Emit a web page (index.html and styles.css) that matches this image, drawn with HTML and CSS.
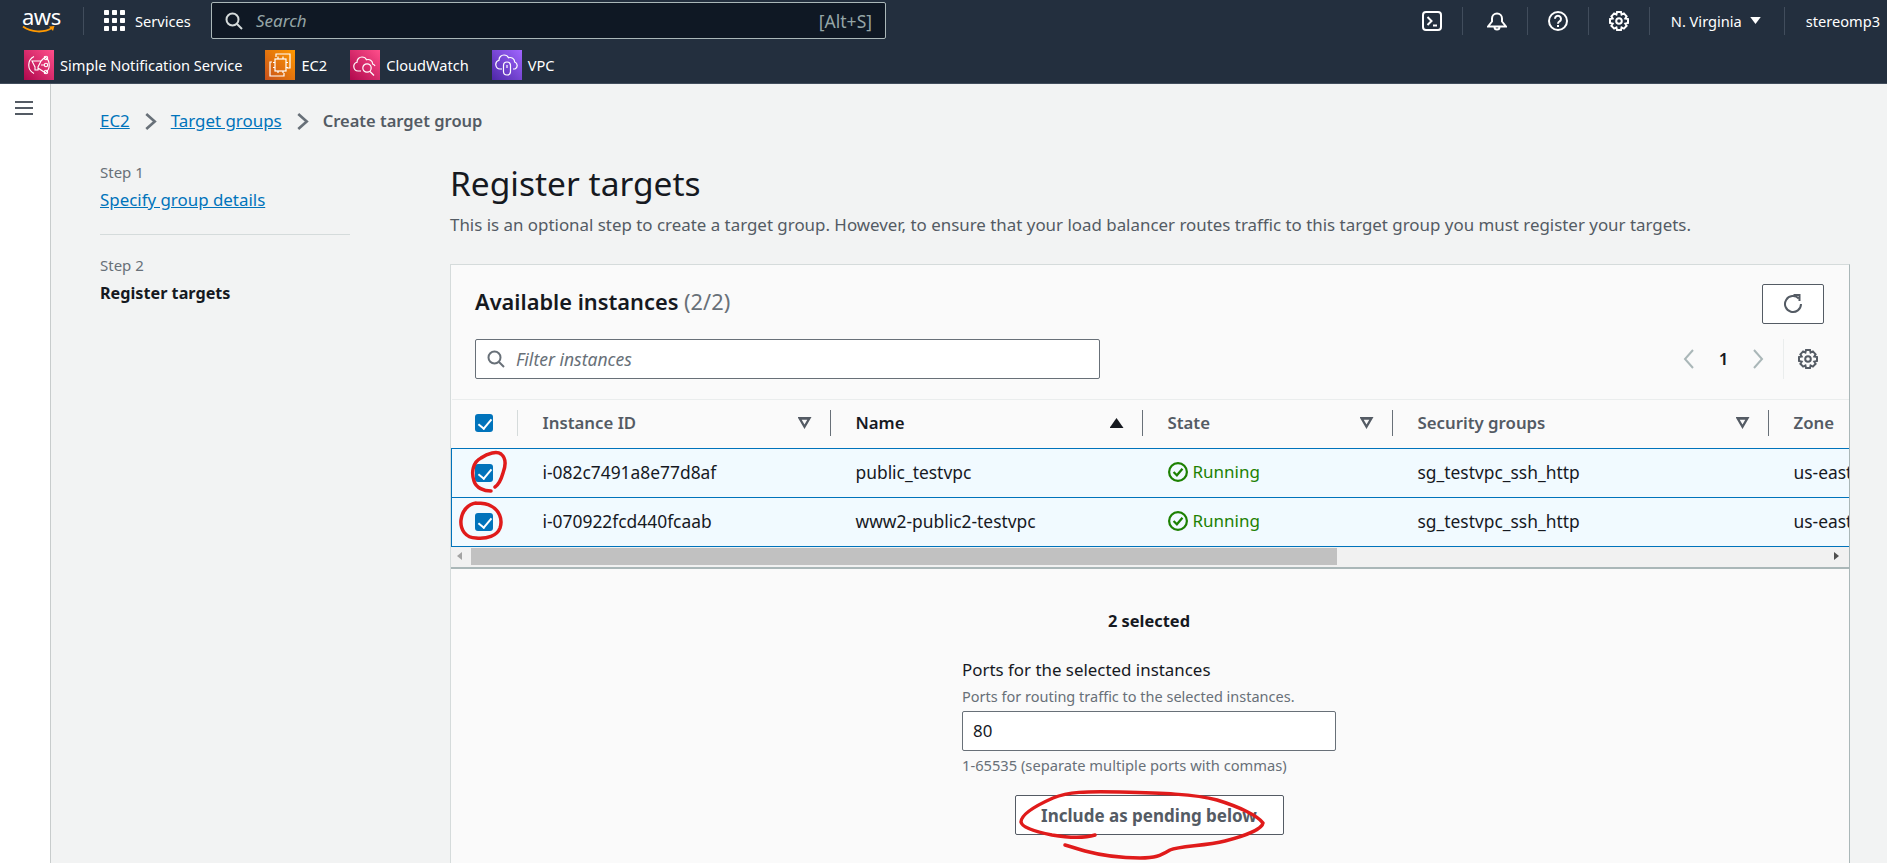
FILE: index.html
```html
<!DOCTYPE html>
<html lang="en">
<head>
  <meta charset="UTF-8">
  <title>Create target group | EC2</title>
  <link rel="stylesheet" href="styles.css">
</head>
<body>

<header class="topbar">
  <div class="nav-row">
    <a class="aws-logo">
      <span class="aws-word">aws</span>
      <svg class="aws-smile" viewBox="0 0 34 9"><path d="M1 1.500C9 7.500 22 8 30 3" fill="none" stroke="#ff9900" stroke-width="2"/><path d="M27 1.500l5.500-.5-1.500 5z" fill="#ff9900"/></svg>
    </a>
    <span class="nav-sep sep-logo"></span>
    <svg class="grid-icon" viewBox="0 0 21 21" fill="#fff"><rect x="0" y="0" width="5" height="5" rx=".8"/><rect x="8" y="0" width="5" height="5" rx=".8"/><rect x="16" y="0" width="5" height="5" rx=".8"/><rect x="0" y="8" width="5" height="5" rx=".8"/><rect x="8" y="8" width="5" height="5" rx=".8"/><rect x="16" y="8" width="5" height="5" rx=".8"/><rect x="0" y="16" width="5" height="5" rx=".8"/><rect x="8" y="16" width="5" height="5" rx=".8"/><rect x="16" y="16" width="5" height="5" rx=".8"/></svg>
    <span class="nav-services">Services</span>
    <div class="nav-search">
      <svg class="search-icon" viewBox="0 0 18 18" fill="none" stroke="#d5dbdb" stroke-width="2"><circle cx="7.500" cy="7.500" r="6"/><path d="M12 12l5 5"/></svg>
      <span class="nav-search-text">Search</span>
      <span class="nav-search-key">[Alt+S]</span>
    </div>
    <div class="nav-right">
      <svg class="nav-icon icon-shell" viewBox="0 0 20 20" fill="none" stroke="#fff" stroke-width="2"><rect x="1" y="1" width="18" height="18" rx="3"/><path d="M5.500 6l4 4-4 4M11 14.500h4"/></svg>
      <span class="nav-sep"></span>
      <svg class="nav-icon" viewBox="0 0 20 20" fill="none" stroke="#fff" stroke-width="2"><path d="M1 15.500h18l-4-5V7.500a5 5 0 0 0-10 0v3zM7.500 16a2.500 2.500 0 0 0 5 0"/></svg>
      <span class="nav-sep"></span>
      <svg class="nav-icon" viewBox="0 0 20 20" fill="none" stroke="#fff" stroke-width="2"><circle cx="10" cy="10" r="9"/><path d="M7 7.800a3 3 0 1 1 4.600 2.500c-1 .7-1.600 1.200-1.600 2.400"/><path d="M10 14v2"/></svg>
      <span class="nav-sep"></span>
      <svg class="nav-icon" viewBox="0 0 20 20" fill="none" stroke="#fff" stroke-width="2"><path d="M8 1h4l.6 2.600 2.300-1.200 2.700 2.900-1.300 2.200L19 8v4l-2.700.6 1.300 2.200-2.700 2.800-2.300-1.200L12 19H8l-.6-2.600-2.300 1.200-2.700-2.800 1.300-2.200L1 12V8l2.700-.5-1.300-2.200 2.700-2.900 2.300 1.200z"/><circle cx="10" cy="10" r="2.800"/></svg>
      <span class="nav-sep"></span>
      <span class="nav-region">N. Virginia</span>
      <svg class="nav-caret" viewBox="0 0 12 8" fill="#fff"><path d="M0 0h12L6 8z"/></svg>
      <span class="nav-sep"></span>
      <span class="nav-user">stereomp3</span>
    </div>
  </div>
  <div class="fav-row">
    <a class="fav">
      <svg class="tile" viewBox="0 0 30 30">
        <defs><linearGradient id="pink" x1="0" y1="1" x2="1" y2="0"><stop offset="0" stop-color="#b0084d"/><stop offset="1" stop-color="#ff4f8b"/></linearGradient></defs>
        <rect width="30" height="30" fill="url(#pink)"/>
        <g fill="none" stroke="#fff" stroke-width="1.100"><path d="M10 6.500a9.500 9.500 0 0 0 0 17M20 6.500a9.500 9.500 0 0 1 0 17"/><path d="M8 11h9l-3 6v3h-3v-3zM17 15h3M17 11l3-3M14 18l6 4"/><circle cx="22" cy="8" r="1.700"/><circle cx="22" cy="15" r="1.700"/><circle cx="22" cy="22" r="1.700"/></g>
      </svg>
      Simple Notification Service
    </a>
    <a class="fav">
      <svg class="tile" viewBox="0 0 30 30">
        <defs><linearGradient id="orange" x1="0" y1="1" x2="1" y2="0"><stop offset="0" stop-color="#c8511b"/><stop offset="1" stop-color="#ff9900"/></linearGradient></defs>
        <rect width="30" height="30" fill="url(#orange)"/>
        <g fill="none" stroke="#fff" stroke-width="1.200"><path d="M11 7V4h14v14h-3M7 12H5v14h14v-3"/><rect x="10" y="9" width="11" height="12"/><path d="M13 6.500v2.500M18 6.500v2.500M13 21v2M18 21v2M8 12.500h2M8 17.500h2M21 12.500h2M21 17.500h2"/></g>
      </svg>
      EC2
    </a>
    <a class="fav">
      <svg class="tile" viewBox="0 0 30 30">
        <rect width="30" height="30" fill="url(#pink)"/>
        <g fill="none" stroke="#fff" stroke-width="1.200"><path d="M11 21H8a4.500 4.500 0 0 1-1-8.800 5 5 0 0 1 5-5.200c2 0 3.700 1 4.500 2.800 3-1 6 1 6.200 4.200 1 .3 2 1 2.300 2"/><circle cx="17" cy="18" r="4.200"/><path d="M20 21.500l4 4"/></g>
      </svg>
      CloudWatch
    </a>
    <a class="fav">
      <svg class="tile" viewBox="0 0 30 30">
        <defs><linearGradient id="purple" x1="0" y1="1" x2="1" y2="0"><stop offset="0" stop-color="#4d27a8"/><stop offset="1" stop-color="#a166ff"/></linearGradient></defs>
        <rect width="30" height="30" fill="url(#purple)"/>
        <g fill="none" stroke="#fff" stroke-width="1.200"><path d="M10 19H8a4.500 4.500 0 0 1-1-8.800A5 5 0 0 1 12 5c2 0 3.700 1 4.500 2.800 3-1 6 1 6.200 4.200a3.800 3.800 0 0 1 .3 7h-2"/><rect x="11.500" y="12" width="7" height="13" rx="3.500"/><path d="M15 15v3"/></g>
      </svg>
      VPC
    </a>
  </div>
</header>

<div class="page">
  <aside class="sidebar">
    <svg class="menu-icon" viewBox="0 0 18 14" fill="none" stroke="#545b64" stroke-width="2"><path d="M0 1h18M0 7h18M0 13h18"/></svg>
  </aside>

  <div class="content">
    <nav class="crumbs">
      <a class="link">EC2</a>
      <svg class="crumb-sep" viewBox="0 0 12 18" fill="none" stroke="#687078" stroke-width="2.500"><path d="M2 2l8 7-8 7"/></svg>
      <a class="link">Target groups</a>
      <svg class="crumb-sep" viewBox="0 0 12 18" fill="none" stroke="#687078" stroke-width="2.500"><path d="M2 2l8 7-8 7"/></svg>
      <span class="crumb-current">Create target group</span>
    </nav>

    <div class="wizard">
      <div class="steps">
        <div class="step-label">Step 1</div>
        <a class="link step-name">Specify group details</a>
        <div class="step-line"></div>
        <div class="step-label">Step 2</div>
        <div class="step-name step-active">Register targets</div>
      </div>

      <main class="main">
        <h1>Register targets</h1>
        <p class="lead">This is an optional step to create a target group. However, to ensure that your load balancer routes traffic to this target group you must register your targets.</p>

        <section class="card">
          <div class="card-head">
            <div class="head-row">
              <h2>Available instances <span class="count">(2/2)</span></h2>
              <button class="btn-icon">
                <svg viewBox="0 0 20 20" width="20" height="20" fill="none" stroke="#545b64" stroke-width="2"><path d="M15.800 4.500A8 8 0 1 0 18 10"/><path d="M10.500 1h6v6" stroke-linejoin="miter"/></svg>
              </button>
            </div>
            <div class="head-row filter-row">
              <div class="filter-box">
                <svg class="filter-search" viewBox="0 0 18 18" fill="none" stroke="#687078" stroke-width="2"><circle cx="7.500" cy="7.500" r="6"/><path d="M12 12l5 5"/></svg>
                <span class="filter-text">Filter instances</span>
              </div>
              <div class="pager">
                <svg class="pager-arrow" viewBox="0 0 12 20" fill="none" stroke="#aab7b8" stroke-width="2"><path d="M10 1l-8 9 8 9"/></svg>
                <span class="pager-num">1</span>
                <svg class="pager-arrow" viewBox="0 0 12 20" fill="none" stroke="#aab7b8" stroke-width="2"><path d="M2 1l8 9-8 9"/></svg>
                <span class="pager-sep"></span>
                <svg class="pager-gear" viewBox="0 0 20 20" fill="none" stroke="#545b64" stroke-width="2"><path d="M8 1h4l.6 2.600 2.300-1.200 2.700 2.900-1.300 2.200L19 8v4l-2.700.6 1.300 2.200-2.700 2.800-2.300-1.200L12 19H8l-.6-2.600-2.300 1.200-2.700-2.800 1.300-2.200L1 12V8l2.700-.5-1.300-2.200 2.700-2.900 2.300 1.200z"/><circle cx="10" cy="10" r="2.800"/></svg>
              </div>
            </div>
          </div>

          <div class="table-wrap">
            <table>
              <colgroup>
                <col class="col-check"><col class="col-id"><col class="col-name"><col class="col-state"><col class="col-sg"><col class="col-zone">
              </colgroup>
              <thead>
                <tr>
                  <th><div class="th-cell th-check"><span class="check"></span></div></th>
                  <th><div class="th-cell">Instance ID <span class="filter-tri"></span></div></th>
                  <th class="th-sorted"><div class="th-cell">Name <span class="sort-tri"></span></div></th>
                  <th><div class="th-cell">State <span class="filter-tri"></span></div></th>
                  <th><div class="th-cell">Security groups <span class="filter-tri"></span></div></th>
                  <th><div class="th-cell th-last">Zone</div></th>
                </tr>
              </thead>
              <tbody>
                <tr>
                  <td class="td-check"><span class="check"></span></td>
                  <td>i-082c7491a8e77d8af</td>
                  <td>public_testvpc</td>
                  <td class="running"><svg class="ok-icon" viewBox="0 0 18 18" fill="none" stroke="#1d8102" stroke-width="2"><circle cx="9" cy="9" r="8"/><path d="M5 9l3 3 5-6"/></svg>Running</td>
                  <td>sg_testvpc_ssh_http</td>
                  <td>us-east-1a</td>
                </tr>
                <tr>
                  <td class="td-check"><span class="check"></span></td>
                  <td>i-070922fcd440fcaab</td>
                  <td>www2-public2-testvpc</td>
                  <td class="running"><svg class="ok-icon" viewBox="0 0 18 18" fill="none" stroke="#1d8102" stroke-width="2"><circle cx="9" cy="9" r="8"/><path d="M5 9l3 3 5-6"/></svg>Running</td>
                  <td>sg_testvpc_ssh_http</td>
                  <td>us-east-1b</td>
                </tr>
              </tbody>
            </table>
          </div>

          <div class="hscroll">
            <span class="scroll-btn scroll-left"></span>
            <div class="scroll-track"><div class="scroll-thumb"></div></div>
            <span class="scroll-btn scroll-right"></span>
          </div>

          <div class="selection">
            <div class="sel-count">2 selected</div>
            <div class="port-form">
              <div class="port-label">Ports for the selected instances</div>
              <div class="port-desc">Ports for routing traffic to the selected instances.</div>
              <div class="port-input">80</div>
              <div class="port-desc port-hint">1-65535 (separate multiple ports with commas)</div>
            </div>
            <button class="btn-include">Include as pending below</button>
          </div>
        </section>
      </main>
    </div>
  </div>
</div>

<!-- red pen marks drawn over the screenshot -->
<svg class="scribble" viewBox="0 0 1887 863" fill="none" stroke="#e01b1b" stroke-width="3.500" stroke-linecap="round" stroke-linejoin="round">
  <path d="M491 491C484 491 476 488 474 481C471 472 473 462 481 458C488 453 497 451 501 454C506 458 506 465 503 473C501 480 498 485 495 487"/>
  <path d="M476 503C468 504 462 511 461 520C460 530 466 538 476 538C487 539 497 536 500 528C503 519 499 510 491 506C486 503 481 503 476 503"/>
  <path d="M1095 835C1085 838 1070 838 1052 835C1037 832 1022 828 1021 822C1021 815 1035 806 1053 798C1068 792 1085 791 1120 792C1160 793 1195 794 1217 800C1240 807 1258 816 1263 823C1262 829 1245 836 1225 841C1205 846 1180 846 1170 850C1160 856 1155 858 1140 858C1120 858 1100 855 1085 851C1078 849 1072 847 1065 845"/>
</svg>

</body>
</html>
```

FILE: styles.css
```css
* {
  box-sizing: border-box;
}
html, body {
  margin: 0;
  height: 863px;
  overflow: hidden;
}
body {
  position: relative;
  font-family: "Noto Sans", "Open Sans", Arial, sans-serif;
  font-size: 16.9px;
  line-height: 20px;
  color: #16191f;
  background: #f2f3f3;
}
h1, h2, p {
  margin: 0;
  font-weight: normal;
}
button {
  font-family: inherit;
}
svg {
  display: block;
  flex: none;
}
.link {
  color: #0073bb;
  text-decoration: underline;
}

/* top navigation */
.topbar {
  height: 84px;
  background: #232f3e;
  color: #fff;
  border-bottom: 1px solid #414d5c;
}
.nav-row {
  height: 41px;
  display: flex;
  align-items: center;
  font-size: 14.6px;
}
.aws-logo {
  width: 83px;
  padding-left: 22px;
  display: block;
}
.aws-word {
  display: block;
  font-size: 22px;
  line-height: 18px;
  letter-spacing: -.5px;
}
.aws-smile {
  width: 34px;
  height: 9px;
}
.nav-sep {
  width: 1px;
  height: 28px;
  background: #414d5c;
  flex: none;
}
.grid-icon {
  width: 21px;
  height: 21px;
  margin-left: 20px;
}
.nav-services {
  margin-left: 10px;
  width: 76px;
}
.nav-search {
  width: 675px;
  height: 37px;
  display: flex;
  align-items: center;
  background: #0f1824;
  border: 1px solid #aab7b8;
  border-radius: 2px;
  padding: 0 13px;
}
.search-icon {
  width: 18px;
  height: 18px;
}
.nav-search-text {
  margin-left: 13px;
  font-style: italic;
  font-size: 17px;
  color: #95a5a6;
}
.nav-search-key {
  margin-left: auto;
  font-size: 17.5px;
  color: #95a5a6;
}
.nav-right {
  margin-left: auto;
  display: flex;
  align-items: center;
  padding-right: 7px;
}
.nav-icon {
  width: 20px;
  height: 20px;
  margin: 0 20px;
}
.icon-shell + .nav-sep {
  margin-right: 4px;
}
.nav-region {
  margin-left: 21px;
}
.nav-caret {
  width: 11px;
  height: 7px;
  margin: 0 23px 0 8px;
}
.nav-user {
  margin-left: 21px;
}
.fav-row {
  height: 42px;
  display: flex;
  align-items: center;
  padding: 6px 0 0 24px;
  font-size: 14.6px;
  gap: 23px;
}
.fav {
  display: flex;
  align-items: center;
  gap: 6px;
}
.tile {
  width: 30px;
  height: 30px;
}

/* page frame */
.page {
  display: flex;
  height: 779px;
  overflow: hidden;
}
.sidebar {
  width: 51px;
  background: #fff;
  border-right: 1px solid #c8cccc;
  padding: 17px 0 0 15px;
  flex: none;
}
.menu-icon {
  width: 18px;
  height: 14px;
}
.content {
  flex: 1;
  min-width: 0;
  padding: 25px 37px 0 49px;
}
.crumbs {
  display: flex;
  align-items: center;
  height: 24px;
  gap: 14px;
}
.crumb-sep {
  width: 13px;
  height: 19px;
}
.crumb-current {
  font-size: 16.5px;
  font-weight: 600;
  color: #545b64;
}
.wizard {
  display: flex;
  margin-top: 29px;
}
.steps {
  width: 250px;
  margin-right: 100px;
  flex: none;
}
.step-label {
  font-size: 15px;
  color: #687078;
}
.step-name {
  display: block;
  margin-top: 8px;
}
.step-active {
  font-size: 16.2px;
  font-weight: 700;
}
.step-line {
  height: 1px;
  background: #d5dbdb;
  margin: 24px 0 20px;
}
.main {
  flex: 1;
  min-width: 0;
  margin-top: 3px;
}
h1 {
  font-size: 33.5px;
  line-height: 36px;
}
.lead {
  margin-top: 14px;
  color: #545b64;
}

/* instances card */
.card {
  height: 599px;
  margin-top: 29px;
  background: #fafafa;
  border: 1px solid #d5dbdb;
  border-right-color: #aab7b8;
  border-bottom: 0;
}
.card-head {
  padding: 19px 25px 20px 24px;
}
.head-row {
  display: flex;
  justify-content: space-between;
  align-items: flex-start;
}
h2 {
  font-size: 21.8px;
  line-height: 36px;
  font-weight: 600;
}
.count {
  font-weight: normal;
  color: #687078;
}
.btn-icon {
  width: 62px;
  height: 40px;
  background: #fff;
  border: 1px solid #545b64;
  border-radius: 2px;
  display: flex;
  align-items: center;
  justify-content: center;
  padding: 0;
}
.filter-row {
  margin-top: 15px;
  align-items: center;
}
.filter-box {
  width: 625px;
  height: 40px;
  background: #fff;
  border: 1px solid #687078;
  border-radius: 2px;
  display: flex;
  align-items: center;
  padding: 0 11px;
}
.filter-search {
  width: 18px;
  height: 18px;
}
.filter-text {
  margin-left: 11px;
  font-size: 17.5px;
  font-style: italic;
  color: #687078;
}
.pager {
  display: flex;
  align-items: center;
  height: 40px;
}
.pager-arrow {
  width: 12px;
  height: 20px;
}
.pager-num {
  width: 57px;
  text-align: center;
  font-weight: 600;
}
.pager-sep {
  width: 1px;
  height: 40px;
  background: #eaeded;
  margin: 0 14px 0 19px;
}
.pager-gear {
  width: 20px;
  height: 20px;
  margin-right: 6px;
}

/* table */
.table-wrap {
  overflow: hidden;
}
table {
  table-layout: fixed;
  border-collapse: collapse;
  width: 1530px;
}
.col-check { width: 66px; }
.col-id { width: 313px; }
.col-name { width: 312px; }
.col-state { width: 250px; }
.col-sg { width: 376px; }
.col-zone { width: 213px; }
th {
  height: 49px;
  padding: 0;
  border-top: 1px solid #eaeded;
  text-align: left;
  font-weight: 600;
  font-size: 16.8px;
  color: #545b64;
}
.th-sorted {
  color: #16191f;
}
.th-cell {
  height: 26px;
  margin-bottom: 2px;
  display: flex;
  align-items: center;
  justify-content: space-between;
  padding: 0 18px 0 25px;
  border-right: 1px solid #687078;
}
.th-check {
  padding: 0 0 0 23px;
  border-right-color: #d5dbdb;
}
.th-last {
  border-right: 0;
}
.filter-tri {
  width: 14px;
  height: 12px;
  background: #545b64;
  clip-path: polygon(0 0, 100% 0, 50% 100%, 0 0, 30% 22%, 50% 62%, 70% 22%, 30% 22%);
}
.sort-tri {
  width: 14px;
  height: 10px;
  background: #16191f;
  clip-path: polygon(50% 0, 100% 100%, 0 100%);
}
td {
  height: 49px;
  padding: 0 0 2px 25px;
  font-size: 17.4px;
  background: #f1faff;
  border-top: 1px solid #0073bb;
  border-bottom: 1px solid #0073bb;
  white-space: nowrap;
  overflow: hidden;
}
.td-check {
  padding: 0 0 0 23px;
  border-left: 1px solid #0073bb;
}
.check {
  display: block;
  width: 18px;
  height: 18px;
  border-radius: 3px;
  background: #0073bb;
  position: relative;
}
.check::after {
  content: "";
  position: absolute;
  left: 6px;
  top: 2px;
  width: 6px;
  height: 11px;
  border: solid #fff;
  border-width: 0 2px 2px 0;
  transform: rotate(40deg);
}
td.running {
  font-size: 17px;
  color: #1d8102;
}
.ok-icon {
  display: inline-block;
  vertical-align: -4px;
  width: 20px;
  height: 20px;
  margin-right: 5px;
}

/* fake scrollbar, Windows style */
.hscroll {
  height: 22px;
  display: flex;
  background: #f1f1f1;
  border-bottom: 2px solid #aab7b8;
}
.scroll-btn {
  width: 20px;
  position: relative;
  flex: none;
}
.scroll-btn::after {
  content: "";
  position: absolute;
  top: 5px;
  border: 4px solid transparent;
}
.scroll-left::after {
  left: 2px;
  border-right: 5px solid #a3a3a3;
}
.scroll-right::after {
  right: 6px;
  border-left: 5px solid #505050;
}
.scroll-track {
  flex: 1;
}
.scroll-thumb {
  width: 866px;
  height: 17px;
  margin-top: 1px;
  background: #c1c1c1;
}

/* bottom form */
.selection {
  padding: 42px 2px 0 0;
  display: flex;
  flex-direction: column;
  align-items: center;
}
.sel-count {
  font-size: 16.4px;
  font-weight: 700;
}
.port-form {
  width: 374px;
  margin-top: 29px;
}
.port-desc {
  font-size: 14.5px;
  line-height: 18px;
  color: #687078;
  margin-top: 7px;
}
.port-input {
  height: 40px;
  margin-top: 6px;
  background: #fff;
  border: 1px solid #687078;
  border-radius: 2px;
  padding: 0 10px;
  line-height: 38px;
}
.port-hint {
  margin-top: 5px;
  font-size: 14.7px;
}
.btn-include {
  width: 269px;
  height: 40px;
  margin-top: 21px;
  background: #fff;
  border: 1px solid #545b64;
  border-radius: 2px;
  font-size: 17px;
  font-weight: 700;
  color: #545b64;
  padding: 0;
}

/* pen marks */
.scribble {
  position: absolute;
  left: 0;
  top: 0;
  width: 1887px;
  height: 863px;
  pointer-events: none;
}
```
